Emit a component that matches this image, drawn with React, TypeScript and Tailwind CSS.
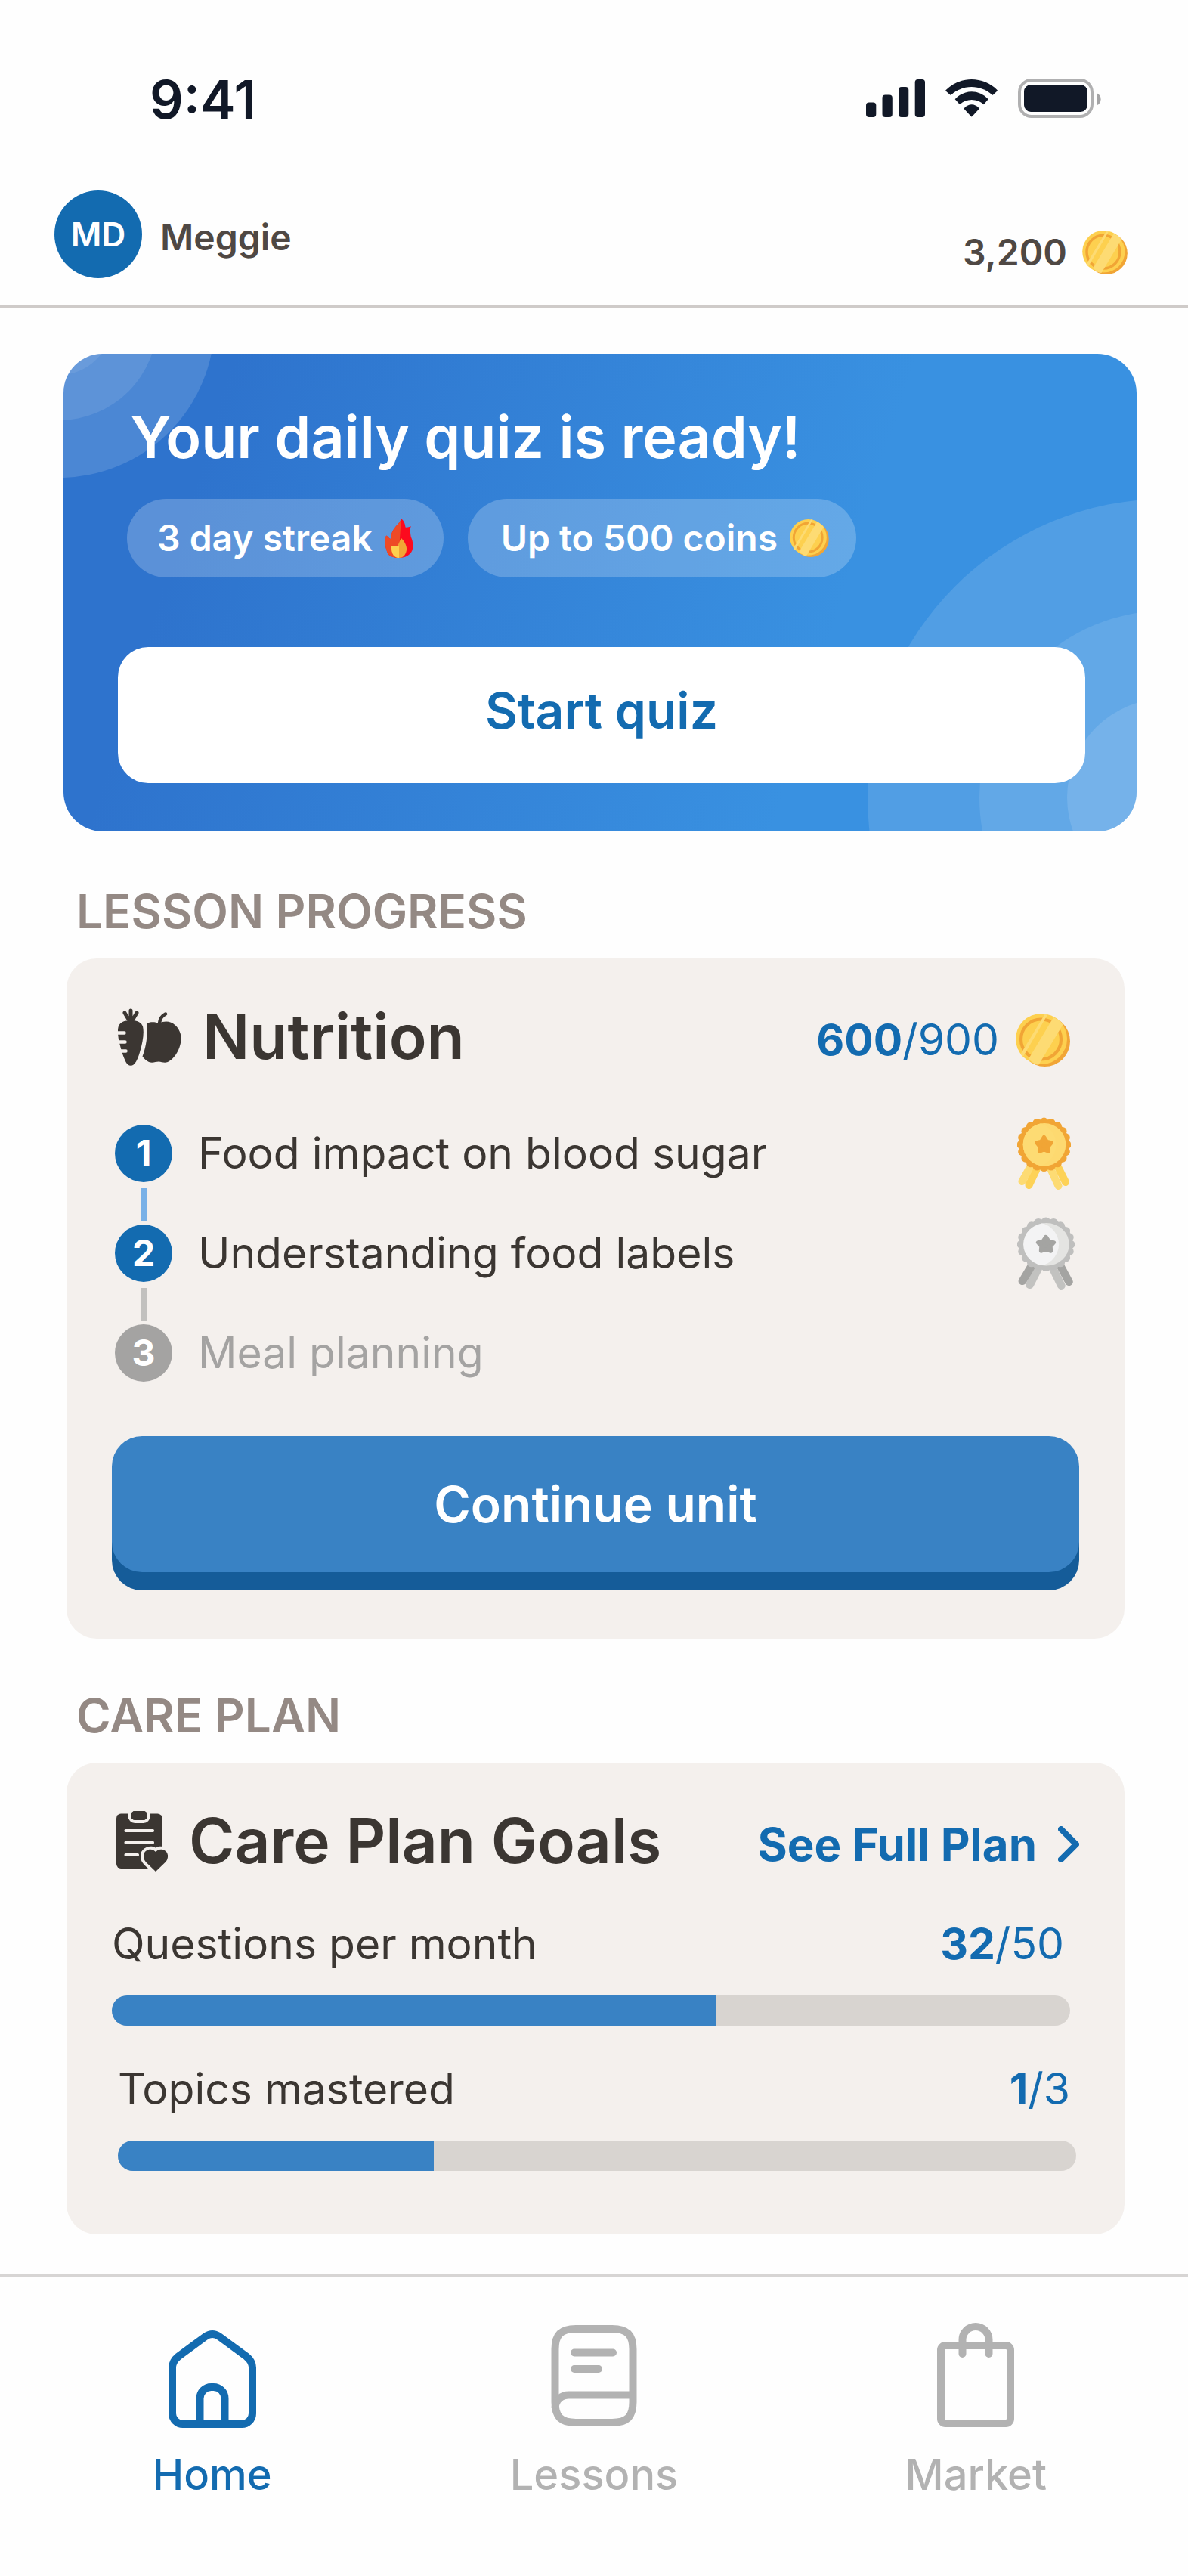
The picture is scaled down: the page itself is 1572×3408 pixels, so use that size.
import React, { useId } from 'react';

function SignalIcon() {
  return (
    <svg viewBox="0 0 78 50" className="h-[50px] w-[78px]" fill="#111827" aria-hidden="true">
      <rect x="0" y="30.5" width="13.3" height="19.5" rx="4" />
      <rect x="21.5" y="20.5" width="13.3" height="29.5" rx="4" />
      <rect x="43" y="10" width="13.3" height="40" rx="4" />
      <rect x="64.7" y="0" width="13.3" height="50" rx="4" />
    </svg>
  );
}

function WifiIcon() {
  return (
    <svg viewBox="0 0 69 50" className="h-[50px] w-[69px]" fill="#111827" aria-hidden="true">
      <path d="M.5 14.2C19-4.7 50-4.7 68.7 14.2Q69 15 68.5 15.6L63 20.6Q62.3 21 61.7 20.6C47 6.6 22 6.6 7.6 20.6Q7 21 6.3 20.6L.6 15.6Q0 15 .5 14.2Z" />
      <path d="M12.7 26.3C25 13 44.5 13 56.7 26.3L50.7 33.3C42 24.9 27.5 24.9 19 33.3Z" />
      <path d="M24.9 39.2Q24.4 38.4 25.2 37.8C30.5 31.6 39 31.6 44.2 37.8Q45 38.4 44.4 39.2L35.4 49.1Q34.6 49.8 33.9 49.1Z" />
    </svg>
  );
}

function BatteryIcon() {
  return (
    <svg viewBox="0 0 110 52" className="h-[52px] w-[110px]" aria-hidden="true">
      <rect x="2" y="2" width="96" height="48" rx="16" fill="none" stroke="#b0b0b1" strokeWidth="4" />
      <rect x="8" y="8" width="84" height="36" rx="9" fill="#111827" />
      <path d="M104 19C107.600 20.500 109.600 23.500 109.600 27.200S107.600 34 104 35.500Z" fill="#a4a4a5" />
    </svg>
  );
}

function Coin({ className }: { className: string }) {
  const clip = useId();
  return (
    <svg viewBox="0 0 72 70" className={className} aria-hidden="true">
      <defs>
        <clipPath id={clip}>
          <ellipse cx="34.5" cy="34" rx="34.5" ry="34" />
        </clipPath>
      </defs>
      <circle cx="38.500" cy="36.500" r="33.500" fill="#f1a535" />
      <ellipse cx="34" cy="33.500" rx="34" ry="33.500" fill="#fdd04f" />
      <circle cx="33.500" cy="34" r="26.500" fill="none" stroke="#f1a535" strokeWidth="4.200" />
      <g clipPath={`url(#${clip})`} fill="#fddb73">
        <path d="M17 60L50 5L64 12L29 70Z" />
        <path d="M5 56L39 0H43L8 60Z" />
      </g>
    </svg>
  );
}

function Flame() {
  return (
    <svg viewBox="0 0 38 52" className="h-[52px] w-[38px]" aria-hidden="true">
      <path
        d="M22 0C26 4 27 7 27.500 11.500C30 12 32 11.500 34.700 10C33.200 15 34 20 34.700 24C37 29 38.500 36 36.500 42C34 48 28 52 19 52C11 52 6 49.500 4 46C1.500 40 0 34 .3 28C.6 25 1.400 23.500 2.800 22.500C4.500 25.500 6.500 26 8.600 27.400C8.200 23 9 19 11.500 15C15 9 20 6.500 22 0Z"
        fill="#fc0a1e"
      />
      <path
        d="M22 0C20 6.500 15 9 11.500 15C9 19 8.200 23 8.600 27.400C6.500 26 4.500 25.500 2.800 22.500C1.400 23.500.6 25 .3 28C0 34 1.500 40 4 46C6 49.500 11 52 19 52L20 26Z"
        fill="#ee4a26"
      />
      <path d="M9 36C12.500 38.500 14.500 36 17 36C19 33 19.500 30 22 26C27 31 30.500 38 28.500 44C27 49 24 52 19 52C13 52 8.500 47 9 36Z" fill="#f1a535" />
      <path d="M9 36C12.500 38.500 14.500 36 19 36V52C13 52 8.500 47 9 36Z" fill="#fdd04f" />
    </svg>
  );
}

type MedalTone = 'gold' | 'silver';

const medalColors = {
  gold: { ring: '#f1a535', face: '#fddb73', shade: '#fdd970', star: '#f1a535', a: '#fddb73', b: '#fdd257', c: '#fddb73', d: '#fdd257' },
  silver: { ring: '#bfbfbe', face: '#f3f3f4', shade: '#e4e4e2', star: '#a4a4a2', a: '#a4a4a2', b: '#c2c2c0', c: '#c2c2c0', d: '#a4a4a2' },
};

function Medal({ tone, className }: { tone: MedalTone; className: string }) {
  const clip = useId();
  const c = medalColors[tone];
  const scallops = Array.from({ length: 20 }, (_, i) => {
    const t = (i / 20) * Math.PI * 2 - Math.PI / 2;
    return [35.5 + 30.2 * Math.cos(t), 36.3 + 30.2 * Math.sin(t)];
  });
  return (
    <svg viewBox="0 0 71 97" preserveAspectRatio="none" className={className} aria-label={`${tone} medal`} role="img">
      <defs>
        <clipPath id={clip}>
          <circle cx="36" cy="36.300" r="28.300" />
        </clipPath>
      </defs>
      <g fill="none" strokeWidth="10" strokeLinecap="round">
        <path d="M26 68L15.500 90" stroke={c.b} />
        <path d="M17 66L6.500 85" stroke={c.a} />
        <path d="M54 66L64 86" stroke={c.d} />
        <path d="M44 68L54.500 91" stroke={c.c} />
      </g>
      <circle cx="35.500" cy="36.300" r="33.500" fill={c.ring} />
      {scallops.map(([x, y], i) => (
        <circle key={i} cx={x} cy={y} r="5.600" fill={c.ring} />
      ))}
      <circle cx="36" cy="36.300" r="28.300" fill={c.shade} />
      <circle cx="22" cy="36.300" r="29.500" fill={c.face} clipPath={`url(#${clip})`} />
      <path
        d="M35.500 26.700L38.900 32.300L45 33.800L40.900 38.600L41.300 45L35.500 42.700L29.700 45L30.100 38.600L26 33.800L32.100 32.300Z"
        fill={c.star}
        stroke={c.star}
        strokeWidth="5.500"
        strokeLinejoin="round"
      />
    </svg>
  );
}

function CarrotAppleIcon() {
  return (
    <svg viewBox="0 0 84 76" className="h-[76px] w-[84px]" aria-hidden="true">
      <g stroke="#3b3632" strokeLinecap="round" fill="none">
        <path d="M17 3V18M9 6L15.500 17M25 6L18.500 17" strokeWidth="5" />
        <path d="M63 7.500C58 10 55.500 14 55 20" strokeWidth="4.500" />
      </g>
      <path d="M17 16.400C24 15.500 31 18 33 24C35 32 33 45 29 58C26 68 22.500 75.800 17 75.800C11.500 75.800 9 68 6 60C2 47-1.500 34 .5 25C2 18.500 9 15.500 17 16.400Z" fill="#3b3632" />
      <path d="M38 20C43 17.500 50 18 54.500 20C62 16 70 17 76 22.500C83 29 85.500 39 82.500 48C80 58 74 67 66 71C61 73 58 70.500 54 70.500C50 70.500 46 72.800 41 71C37.500 69 34.500 66.500 32.500 63.500C37 52 40 36 38 20Z" fill="#3b3632" />
      <path d="M-4 32.500H8.500M-4 44.500H9.500M-4 56.500H10.500" stroke="#f4f0ed" strokeWidth="4.500" strokeLinecap="round" />
    </svg>
  );
}

function ClipboardIcon() {
  return (
    <svg viewBox="0 0 68 80" className="h-20 w-[68px]" aria-hidden="true">
      <rect x="0" y="3.500" width="60.500" height="72.500" rx="6" fill="#3b3632" />
      <rect x="17.500" y="-2" width="25.300" height="16" rx="7" fill="#3b3632" stroke="#f4f0ed" strokeWidth="4" />
      <rect x="19.500" y="0" width="21.300" height="12" rx="5" fill="#3b3632" />
      <path d="M12.500 26H48M12.500 41.800H48M12.500 58H28" stroke="#f4f0ed" strokeWidth="4.200" strokeLinecap="round" />
      <path
        d="M52 80L39.500 68C34.500 63 35 55.500 39.500 52.500C44 49.500 49 50.500 52 54C55 50.500 60 49.500 64.500 52.500C69 55.500 69.500 63 64.500 68Z"
        fill="#3b3632"
        stroke="#f4f0ed"
        strokeWidth="8"
        paintOrder="stroke"
      />
    </svg>
  );
}

function HomeIcon() {
  return (
    <svg viewBox="0 0 120 140" className="h-[140px] w-[120px]" fill="none" stroke="currentColor" strokeWidth="10" aria-hidden="true">
      <path d="M7 60.500C7 54 10 49.500 15 45.500L51 19Q60 13 69 19L105 45.500C110 49.500 113 54 113 60.500V121A14 14 0 0 1 99 135H21A14 14 0 0 1 7 121Z" />
      <path d="M43.500 135V101A15 15 0 0 1 58.500 86H61.500A15 15 0 0 1 76.500 101V135" />
    </svg>
  );
}

function LessonsIcon() {
  return (
    <svg viewBox="0 0 120 140" className="h-[140px] w-[120px]" fill="none" stroke="currentColor" strokeWidth="10" strokeLinecap="round" aria-hidden="true">
      <path d="M36 9H84C104 9 111.500 17 111.500 36V106C111.500 125 104 133 84 133H36C16 133 8.500 125 8.500 106V36C8.500 17 16 9 36 9Z" />
      <path d="M34 40.500H85M34 62H66" />
      <path d="M111 96.500H27C17 96.500 9 103 8.500 114" strokeLinecap="butt" />
    </svg>
  );
}

function MarketIcon() {
  return (
    <svg viewBox="0 0 120 140" className="h-[140px] w-[120px]" fill="none" stroke="currentColor" strokeWidth="10" strokeLinecap="round" aria-hidden="true">
      <rect x="14" y="31" width="92" height="103" rx="6" />
      <path d="M42.500 42V23.500A17.500 17.500 0 0 1 77.500 23.500V42" />
    </svg>
  );
}

function SectionLabel({ children, className }: { children: React.ReactNode; className: string }) {
  return <h2 className={`ml-[101px] pb-[22px] text-[62px] leading-[80px] font-semibold text-[#948984] ${className}`}>{children}</h2>;
}

function Count({ value, total }: { value: number; total: number }) {
  return (
    <span className="text-[57px] leading-[72px] text-[#136bb0]">
      <span className="font-bold">{value}</span>/{total}
    </span>
  );
}

const steps = [
  { n: 1, label: 'Food impact on blood sugar', done: true },
  { n: 2, label: 'Understanding food labels', done: true },
  { n: 3, label: 'Meal planning', done: false },
];

function Goal({ label, value, total, percent, className }: { label: string; value: number; total: number; percent: number; className: string }) {
  return (
    <div className={className}>
      <div className="flex items-center justify-between pr-2">
        <span className="text-[57px] leading-[72px] text-[#3b3632]">{label}</span>
        <Count value={value} total={total} />
      </div>
      <div
        role="progressbar"
        aria-label={label}
        aria-valuenow={value}
        aria-valuemax={total}
        className="mt-8 h-10 overflow-hidden rounded-full bg-[#d8d4d0]"
      >
        <div className="h-full bg-[#3982c4]" style={{ width: `${percent}%` }} />
      </div>
    </div>
  );
}

const tabs = [
  { label: 'Home', icon: <HomeIcon />, color: 'text-[#136bb0]' },
  { label: 'Lessons', icon: <LessonsIcon />, color: 'text-[#b2b2b2]' },
  { label: 'Market', icon: <MarketIcon />, color: 'text-[#b2b2b2]' },
];

export default function App() {
  return (
    <div className="flex min-h-screen flex-col bg-[#fefefe] font-['Inter',sans-serif]">
      <div className="flex items-center justify-between pt-[88px] pr-[115px] pl-[198px]">
        <span className="text-[70px] leading-[88px] font-semibold text-[#111827]">9:41</span>
        <div className="flex items-center gap-[27px] pb-1">
          <SignalIcon />
          <WifiIcon />
          <BatteryIcon />
        </div>
      </div>

      <header className="flex items-end justify-between border-b-4 border-[#cfcbc9] pt-[76px] pr-20 pb-9 pl-[72px]">
        <div className="flex items-center gap-6">
          <div className="flex size-[116px] items-center justify-center rounded-full bg-[#136bb0] text-[44px] font-semibold text-white">MD</div>
          <span className="pt-2 text-[48px] leading-[64px] font-semibold text-[#4f4844]">Meggie</span>
        </div>
        <div className="flex h-[68px] items-center gap-5">
          <span className="text-[48px] leading-[64px] font-semibold text-[#4f4844]">3,200</span>
          <Coin className="h-[58px] w-[60px]" />
        </div>
      </header>

      <main className="pb-[52px]">
        <section className="relative mt-[60px] mr-[68px] ml-[84px] overflow-hidden rounded-[52px] bg-linear-[107deg,#2e73cd_14%,#3991e1_70%] pt-16 pr-[68px] pb-16 pl-[72px]">
          <div className="absolute top-[-248px] left-[-212px] size-[412px] rounded-full bg-white/14" />
          <div className="absolute top-[-172px] left-[-136px] size-[260px] rounded-full bg-white/10" />
          <div className="absolute top-[-112px] left-[-76px] size-[140px] rounded-full bg-white/8" />
          <div className="absolute right-[-434px] bottom-[-350px] size-[790px] rounded-full bg-white/12" />
          <div className="absolute right-[-286px] bottom-[-202px] size-[494px] rounded-full bg-white/10" />
          <div className="absolute right-[-170px] bottom-[-86px] size-[262px] rounded-full bg-white/12" />
          <div className="relative">
            <h1 className="ml-4 text-[77px] leading-[92px] font-semibold text-white">Your daily quiz is ready!</h1>
            <div className="mt-9 ml-3 flex gap-8 text-[48px] font-semibold text-white">
              <div className="flex h-[104px] items-center gap-4 rounded-full bg-white/22 px-10">
                <span>3 day streak</span>
                <Flame />
              </div>
              <div className="flex h-[104px] items-center gap-4 rounded-full bg-white/22 pr-9 pl-11">
                <span>Up to 500 coins</span>
                <Coin className="h-[50px] w-[52px]" />
              </div>
            </div>
            <button type="button" className="mt-[92px] h-[180px] w-full rounded-[40px] bg-white pb-3 text-[66px] font-semibold text-[#136bb0]">
              Start quiz
            </button>
          </div>
        </section>

        <SectionLabel className="pt-[66px]">LESSON PROGRESS</SectionLabel>
        <section className="mr-[84px] ml-[88px] rounded-[40px] bg-[#f4f0ed] px-[60px] pt-14 pb-[88px]">
          <div className="flex h-24 items-center justify-between pr-3 pl-2">
            <div className="flex items-center gap-7">
              <CarrotAppleIcon />
              <h3 className="text-[82px] leading-[96px] font-semibold text-[#3b3632]">Nutrition</h3>
            </div>
            <div className="flex items-center gap-[22px] pt-2">
              <Count value={600} total={900} />
              <Coin className="h-[70px] w-[72px]" />
            </div>
          </div>
          <ol className="mt-[68px] pr-[6px] pl-1">
            {steps.map((s) => (
              <li key={s.n}>
                {s.n > 1 && (
                  <div className="h-14 pt-2">
                    <div className={`ml-[34px] h-11 w-2 ${s.done ? 'bg-[#79b1e7]' : 'bg-[#c2c1bf]'}`} />
                  </div>
                )}
                <div className="flex h-[76px] items-center gap-[34px]">
                  <span className={`flex size-[76px] shrink-0 items-center justify-center rounded-full text-[48px] font-bold text-white ${s.done ? 'bg-[#136bb0]' : 'bg-[#a4a3a2]'}`}>
                    {s.n}
                  </span>
                  <span className={`flex-1 text-[57px] leading-[72px] ${s.done ? 'text-[#3b3632]' : 'text-[#a4a3a2]'}`}>{s.label}</span>
                  {s.n === 1 && (
                    <span className="w-[76px]">
                      <Medal tone="gold" className="h-[97px] w-[71px]" />
                    </span>
                  )}
                  {s.n === 2 && <Medal tone="silver" className="h-[97px] w-[76px]" />}
                </div>
              </li>
            ))}
          </ol>
          <button type="button" className="mt-[72px] block h-[180px] w-full rounded-[40px] bg-[#3982c4] text-[66px] font-semibold text-white shadow-[0_24px_0_#155c99]">
            Continue unit
          </button>
        </section>

        <SectionLabel className="pt-[62px]">CARE PLAN</SectionLabel>
        <section className="mr-[84px] ml-[88px] rounded-[40px] bg-[#f4f0ed] px-[60px] pt-14 pb-[84px]">
          <div className="flex h-24 items-center justify-between pl-[6px]">
            <div className="flex items-center gap-7">
              <ClipboardIcon />
              <h3 className="text-[82px] leading-[96px] font-semibold text-[#3b3632]">Care Plan Goals</h3>
            </div>
            <a href="#plan" className="flex items-center gap-7 pt-2 text-[60px] leading-[72px] font-bold text-[#136bb0]">
              See Full Plan
              <svg viewBox="0 0 28 48" className="h-12 w-7" fill="none" stroke="currentColor" strokeWidth="8" strokeLinecap="round" strokeLinejoin="round" aria-hidden="true">
                <path d="M4 4L24 24L4 44" />
              </svg>
            </a>
          </div>
          <Goal label="Questions per month" value={32} total={50} percent={63} className="mt-[52px] mr-3" />
          <Goal label="Topics mastered" value={1} total={3} percent={33} className="mt-12 mr-1 ml-2" />
        </section>
      </main>

      <nav className="grid flex-1 grid-cols-3 border-t-4 border-[#d7d5d4] px-[28px] pt-[60px]">
        {tabs.map((t) => (
          <a key={t.label} href={`#${t.label.toLowerCase()}`} className={`flex flex-col items-center gap-[30px] ${t.color}`}>
            {t.icon}
            <span className="text-[56px] leading-[64px] font-medium">{t.label}</span>
          </a>
        ))}
      </nav>
    </div>
  );
}
